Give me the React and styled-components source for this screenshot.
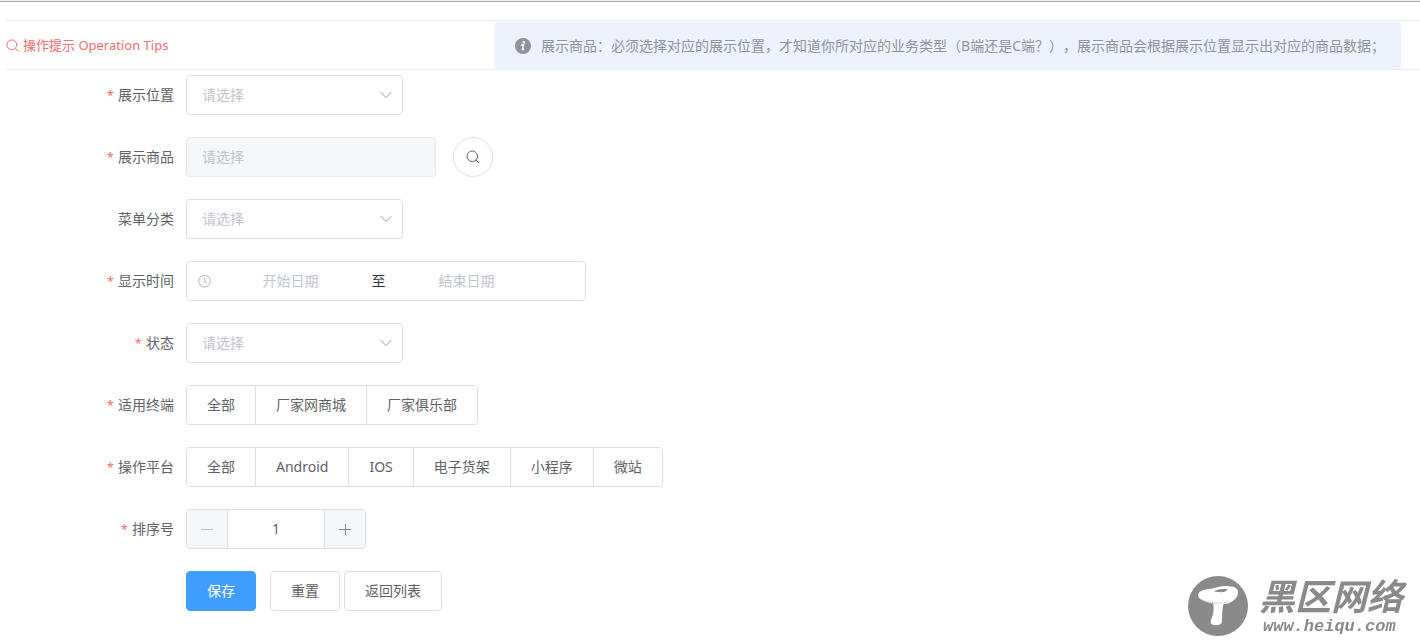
import { useState } from "react";
import styled, { createGlobalStyle } from "styled-components";

const GlobalStyle = createGlobalStyle`
  * {
    box-sizing: border-box;
  }
  body {
    margin: 0;
    background: #fff;
    color: #606266;
    font-family: "Noto Sans", "Noto Sans CJK SC", sans-serif;
    font-size: 14px;
    line-height: 20px;
    text-spacing-trim: space-all;
  }
  button, input, select {
    font: inherit;
    color: inherit;
  }
`;

const Page = styled.div`
  border-top: 1px solid #f0f0f0;
  padding-bottom: 24px;
`;

const TopLine = styled.div`
  height: 1px;
  background: #ababab;
`;

const Header = styled.header`
  display: flex;
  align-items: flex-end;
  justify-content: space-between;
  margin: 18px 0 0 6px;
  padding-right: 19px;
  height: 50px;
  border-top: 1px solid #ebeef5;
  border-bottom: 1px solid #ebeef5;
`;

const HeaderTitle = styled.h1`
  display: flex;
  align-items: center;
  gap: 4px;
  height: 48px;
  margin: 0;
  font-size: 13px;
  font-weight: 400;
  color: #f56c6c;
  white-space: nowrap;
`;

const Tip = styled.div`
  display: flex;
  align-items: center;
  gap: 10px;
  min-height: 47px;
  padding: 0 16px 0 21px;
  border-radius: 4px;
  background: #edf2fc;
  color: #909399;

  svg {
    flex: none;
  }
`;

const Form = styled.form`
  display: flex;
  flex-direction: column;
  gap: 22px;
  padding: 5px 6px 0;
`;

const Row = styled.div`
  display: grid;
  grid-template-columns: 168px 1fr;
  column-gap: 12px;
  align-items: center;
  min-height: 40px;
`;

const Label = styled.label`
  text-align: right;

  &::before {
    content: "${(props) => (props.$required ? "*" : "")}";
    margin-right: 4px;
    font-size: 13px;
    color: #f56c6c;
  }
`;

const Content = styled.div`
  grid-column: 2;
  display: flex;
  align-items: center;
  gap: ${(props) => props.$gap || 0}px;
`;

const SelectBox = styled.div`
  display: grid;
  align-items: center;
  width: 217px;

  > * {
    grid-area: 1 / 1;
  }
  svg {
    justify-self: end;
    margin-right: 11px;
    pointer-events: none;
  }
`;

const NativeSelect = styled.select`
  width: 100%;
  height: 40px;
  padding: 0 30px 0 15px;
  appearance: none;
  border: 1px solid #dcdfe6;
  border-radius: 4px;
  background: #fff;
  color: #c0c4cc;
  outline: none;

  &:focus {
    border-color: #409eff;
  }
`;

const TextInput = styled.input`
  width: 250px;
  height: 40px;
  padding: 0 15px 2px;
  border: 1px solid #e4e7ed;
  border-radius: 4px;
  background: #f5f7fa;

  &::placeholder {
    color: #c0c4cc;
  }
`;

const RoundButton = styled.button`
  display: flex;
  align-items: center;
  justify-content: center;
  width: 40px;
  height: 40px;
  padding: 0;
  border: 1px solid #dcdfe6;
  border-radius: 50%;
  background: #fff;
  cursor: pointer;
`;

const DateRange = styled.div`
  display: flex;
  align-items: center;
  width: 400px;
  height: 40px;
  padding: 0 10px;
  border: 1px solid #dcdfe6;
  border-radius: 4px;

  svg {
    flex: none;
    margin-right: 5px;
  }
`;

const DateInput = styled.input`
  width: 147px;
  padding: 0;
  border: none;
  outline: none;
  text-align: center;

  &::placeholder {
    color: #c0c4cc;
  }
`;

const Separator = styled.span`
  width: 29px;
  text-align: center;
  color: #303133;
`;

const Group = styled.div`
  display: flex;
  border: 1px solid #dcdfe6;
  border-radius: 4px;
  overflow: hidden;
`;

const Choice = styled.label`
  position: relative;
  display: flex;
  align-items: center;
  height: 38px;
  padding: 0 20px;
  color: ${(props) => (props.$checked ? "#fff" : "#606266")};
  background: ${(props) => (props.$checked ? "#409eff" : "#fff")};
  cursor: pointer;

  & + & {
    border-left: 1px solid #dcdfe6;
  }
  input {
    position: absolute;
    inset: 0;
    margin: 0;
    opacity: 0;
    cursor: pointer;
  }
`;

const Stepper = styled.div`
  display: grid;
  grid-template-columns: 41px 1fr 41px;
  width: 180px;
  height: 40px;
  border: 1px solid #dcdfe6;
  border-radius: 4px;
  overflow: hidden;
`;

const StepButton = styled.button`
  display: flex;
  align-items: center;
  justify-content: center;
  padding: 0;
  border: solid #dcdfe6;
  border-width: ${(props) => (props.$side === "left" ? "0 1px 0 0" : "0 0 0 1px")};
  background: #f5f7fa;
  color: #85888d;
  cursor: pointer;

  &:disabled {
    color: #c0c4cc;
    cursor: not-allowed;
  }
`;

const StepInput = styled.input`
  width: 100%;
  min-width: 0;
  padding: 0;
  border: none;
  outline: none;
  text-align: center;
`;

const Button = styled.button`
  height: 40px;
  padding: 0 20px;
  border: 1px solid ${(props) => (props.$primary ? "#409eff" : "#dcdfe6")};
  border-radius: 4px;
  background: ${(props) => (props.$primary ? "#409eff" : "#fff")};
  color: ${(props) => (props.$primary ? "#fff" : "#606266")};
  margin-right: ${(props) => (props.$primary ? "10px" : "0")};
  cursor: pointer;
`;

const Watermark = styled.div`
  position: fixed;
  right: 17px;
  bottom: 5px;
  display: flex;
  align-items: center;
  gap: 11px;
  color: #8a8a8a;
  pointer-events: none;
`;

const BrandText = styled.div`
  display: flex;
  flex-direction: column;
  font-style: italic;
  font-weight: 700;
`;

const BrandName = styled.span`
  font-family: "Liberation Sans", "Noto Sans CJK SC", sans-serif;
  font-size: 36px;
  line-height: 41px;
`;

const BrandUrl = styled.span`
  padding-left: 4px;
  font-family: "Liberation Mono", monospace;
  font-size: 17px;
  line-height: 17px;
`;

function SearchIcon({ size = 14 }) {
  return (
    <svg width={size} height={size} viewBox="0 0 14 14" fill="none" stroke="currentColor" strokeLinecap="round">
      <circle cx="6.3" cy="6.3" r="5.3" />
      <path d="M10.2 10.2 13 13" />
    </svg>
  );
}

function ClockIcon() {
  return (
    <svg width="15" height="14" viewBox="0 0 15 14" fill="none" stroke="#c0c4cc" strokeWidth="1.2" strokeLinecap="round">
      <circle cx="7.5" cy="7" r="5.8" />
      <path d="M7.5 3.5V7.3L9.2 8.8" />
    </svg>
  );
}

function InfoIcon() {
  return (
    <svg width="16" height="16" viewBox="0 0 16 16">
      <circle cx="8" cy="8" r="8" fill="#909399" />
      <circle cx="8.9" cy="4.2" r="1.2" fill="#fff" />
      <path d="M6.5 7.2 8.6 6.5 7.3 11.6c-.1.5.4.5 1.5-.4" fill="none" stroke="#fff" strokeWidth="1.4" strokeLinecap="round" />
    </svg>
  );
}

function MushroomIcon() {
  return (
    <svg width="60" height="60" viewBox="0 0 60 60">
      <circle cx="30" cy="30" r="30" fill="#8a8a8a" />
      <path d="M25 26c1 7 1 11-2 18-1 3 0 5 5 5 4 0 6-1 6-4 0-6 0-12 2-19z" fill="#fff" />
      <path d="M10 19c0-3 4-5 10-6 6 0 10-3 17-3 9 0 13 2 13 6 0 6-5 10-12 12-6 1-13 0-19-2-6-2-9-4-9-7z" fill="#fff" />
      <path d="M11 22c5 4 11 4 17 5 5 0 9 0 13-2M13 24c5 3 10 4 16 4" fill="none" stroke="#aaa" strokeWidth=".8" strokeDasharray="1 1" />
      <path d="M26 16c2-3 7-3 13-3 1 1-2 3-4 3-3 1-6-1-9 0z" fill="#8a8a8a" />
    </svg>
  );
}

function Select({ id }) {
  return (
    <SelectBox>
      <NativeSelect id={id} defaultValue="">
        <option value="">请选择</option>
      </NativeSelect>
      <svg width="12" height="8" viewBox="0 0 12 8" fill="none" stroke="#c0c4cc" strokeWidth="1.2" strokeLinecap="round">
        <path d="M1 1.5 6 6.5l5-5" />
      </svg>
    </SelectBox>
  );
}

function CheckGroup({ labelId, options }) {
  const [checked, setChecked] = useState([]);

  const toggle = (name) => {
    setChecked(checked.includes(name) ? checked.filter((item) => item !== name) : [...checked, name]);
  };

  return (
    <Group role="group" aria-labelledby={labelId}>
      {options.map((name) => (
        <Choice key={name} $checked={checked.includes(name)}>
          <input type="checkbox" checked={checked.includes(name)} onChange={() => toggle(name)} />
          {name}
        </Choice>
      ))}
    </Group>
  );
}

const terminals = ["全部", "厂家网商城", "厂家俱乐部"];
const platforms = ["全部", "Android", "IOS", "电子货架", "小程序", "微站"];

export default function App() {
  const [sort, setSort] = useState(1);

  return (
    <Page>
      <GlobalStyle />
      <TopLine />
      <Header>
        <HeaderTitle>
          <SearchIcon size={13} />
          操作提示 Operation Tips
        </HeaderTitle>
        <Tip>
          <InfoIcon />
          <span>
            展示商品：必须选择对应的展示位置，才知道你所对应的业务类型（B端还是C端？），展示商品会根据展示位置显示出对应的商品数据；
          </span>
        </Tip>
      </Header>
      <Form onSubmit={(e) => e.preventDefault()}>
        <Row>
          <Label htmlFor="position" $required>展示位置</Label>
          <Content>
            <Select id="position" />
          </Content>
        </Row>
        <Row>
          <Label htmlFor="goods" $required>展示商品</Label>
          <Content $gap={17}>
            <TextInput id="goods" placeholder="请选择" disabled />
            <RoundButton type="button" aria-label="搜索">
              <SearchIcon />
            </RoundButton>
          </Content>
        </Row>
        <Row>
          <Label htmlFor="category">菜单分类</Label>
          <Content>
            <Select id="category" />
          </Content>
        </Row>
        <Row>
          <Label htmlFor="start" $required>显示时间</Label>
          <Content>
            <DateRange>
              <ClockIcon />
              <DateInput id="start" placeholder="开始日期" />
              <Separator>至</Separator>
              <DateInput aria-label="结束日期" placeholder="结束日期" />
            </DateRange>
          </Content>
        </Row>
        <Row>
          <Label htmlFor="status" $required>状态</Label>
          <Content>
            <Select id="status" />
          </Content>
        </Row>
        <Row>
          <Label as="span" id="terminal" $required>适用终端</Label>
          <Content>
            <CheckGroup labelId="terminal" options={terminals} />
          </Content>
        </Row>
        <Row>
          <Label as="span" id="platform" $required>操作平台</Label>
          <Content>
            <CheckGroup labelId="platform" options={platforms} />
          </Content>
        </Row>
        <Row>
          <Label htmlFor="sort" $required>排序号</Label>
          <Content>
            <Stepper>
              <StepButton type="button" $side="left" aria-label="减少" disabled={sort <= 1} onClick={() => setSort(sort - 1)}>
                <svg width="12" height="12" viewBox="0 0 12 12" stroke="currentColor">
                  <path d="M0 6.5h12" />
                </svg>
              </StepButton>
              <StepInput id="sort" value={sort} onChange={(e) => setSort(Number(e.target.value) || 1)} />
              <StepButton type="button" $side="right" aria-label="增加" onClick={() => setSort(sort + 1)}>
                <svg width="12" height="12" viewBox="0 0 12 12" stroke="currentColor">
                  <path d="M0 6.5h12M6.5 1v11" />
                </svg>
              </StepButton>
            </Stepper>
          </Content>
        </Row>
        <Row>
          <Content $gap={4}>
            <Button type="submit" $primary>保存</Button>
            <Button type="reset">重置</Button>
            <Button type="button">返回列表</Button>
          </Content>
        </Row>
      </Form>
      <Watermark>
        <MushroomIcon />
        <BrandText>
          <BrandName>黑区网络</BrandName>
          <BrandUrl>www.heiqu.com</BrandUrl>
        </BrandText>
      </Watermark>
    </Page>
  );
}
